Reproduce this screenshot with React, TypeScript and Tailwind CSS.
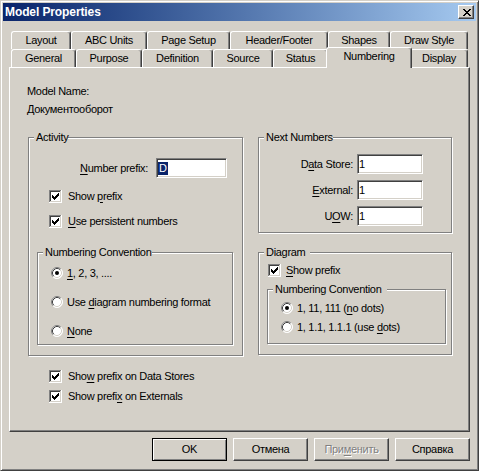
import type { ReactNode } from 'react';

const rowOne = [
  { label: 'Layout', w: 'w-[60px]' },
  { label: 'ABC Units', w: 'w-[76px]' },
  { label: 'Page Setup', w: 'w-[83px]' },
  { label: 'Header/Footer', w: 'w-[98px]' },
  { label: 'Shapes', w: 'w-[62px]' },
  { label: 'Draw Style', w: 'w-[78px]' },
];

const rowTwo = [
  { label: 'General', w: 'w-[65px]' },
  { label: 'Purpose', w: 'w-[66px]' },
  { label: 'Definition', w: 'w-[71px]' },
  { label: 'Source', w: 'w-[60px]' },
  { label: 'Status', w: 'w-[55px]' },
  { label: 'Numbering', w: 'w-[86px]', active: true },
  { label: 'Display', w: 'w-[58px]' },
];

// pixel check mark, [x, y, width]
const checkPixels = [
  [9, 3, 1],
  [8, 4, 2],
  [3, 5, 1],
  [7, 5, 3],
  [3, 6, 2],
  [6, 6, 3],
  [3, 7, 5],
  [4, 8, 3],
  [5, 9, 1],
];

function U({ children }: { children: ReactNode }) {
  return <span className="underline underline-offset-[2px] decoration-1">{children}</span>;
}

function CheckBox({ checked = true }: { checked?: boolean }) {
  return (
    <svg width="13" height="13" viewBox="0 0 13 13" shapeRendering="crispEdges" className="shrink-0">
      <rect x="0" y="0" width="13" height="13" fill="#fff" />
      <rect x="0" y="0" width="12" height="1" fill="#808080" />
      <rect x="0" y="0" width="1" height="12" fill="#808080" />
      <rect x="1" y="1" width="10" height="1" fill="#404040" />
      <rect x="1" y="1" width="1" height="10" fill="#404040" />
      <rect x="1" y="11" width="11" height="1" fill="#d4d0c8" />
      <rect x="11" y="1" width="1" height="11" fill="#d4d0c8" />
      {checked &&
        checkPixels.map(([x, y, w]) => (
          <rect key={`${x}-${y}`} x={x} y={y} width={w} height="1" fill="#000" />
        ))}
    </svg>
  );
}

function Radio({ checked = false }: { checked?: boolean }) {
  return (
    <svg width="12" height="12" viewBox="0 0 12 12" className="shrink-0">
      <circle cx="6" cy="6" r="5.5" fill="#fff" />
      <path d="M2.11 9.89 A5.5 5.5 0 0 1 9.89 2.11" fill="none" stroke="#808080" />
      <path d="M9.89 2.11 A5.5 5.5 0 0 1 2.11 9.89" fill="none" stroke="#fff" />
      <path d="M2.82 9.18 A4.5 4.5 0 0 1 9.18 2.82" fill="none" stroke="#404040" />
      <path d="M9.18 2.82 A4.5 4.5 0 0 1 2.82 9.18" fill="none" stroke="#d4d0c8" />
      {checked && <circle cx="6" cy="6" r="2" fill="#000" />}
    </svg>
  );
}

function Group({
  label,
  className,
  labelClass = '',
  children,
}: {
  label: string;
  className: string;
  labelClass?: string;
  children: ReactNode;
}) {
  return (
    <div className={`relative border border-[#808080] shadow-[inset_1px_1px_0_#fff,1px_1px_0_#fff] ${className}`}>
      <span className={`absolute -top-[7px] left-[5px] pl-[2px] bg-[#d4d0c8] leading-[13px] ${labelClass}`}>
        {label}
      </span>
      {children}
    </div>
  );
}

function Field({ w, children }: { w: string; children: ReactNode }) {
  return (
    <div
      className={`h-[20px] ${w} bg-white border border-t-[#808080] border-l-[#808080] border-r-white border-b-white shadow-[inset_1px_1px_0_#404040,inset_-1px_-1px_0_#d4d0c8] flex items-center pl-[1px]`}
    >
      {children}
    </div>
  );
}

function Button({ children, main, disabled }: { children: ReactNode; main?: boolean; disabled?: boolean }) {
  return (
    <button
      type="button"
      className={`w-[75px] h-[23px] flex items-center justify-center ${
        main
          ? 'border border-black shadow-[inset_1px_1px_0_#fff,inset_-1px_-1px_0_#808080]'
          : 'border border-t-white border-l-white border-r-[#404040] border-b-[#404040] shadow-[inset_-1px_-1px_0_#808080]'
      } ${disabled ? 'text-[#808080] [text-shadow:1px_1px_0_#fff]' : ''}`}
    >
      {children}
    </button>
  );
}

function Tab({ label, w, active }: { label: string; w: string; active?: boolean }) {
  return (
    <div
      className={`${w} border-t border-l border-r border-t-white border-l-white border-r-[#404040] rounded-t-[3px] shadow-[inset_-1px_0_0_#808080] flex justify-center leading-[17px] shrink-0 ${
        active ? 'h-[21px] -mt-[2px] -mx-[2px] relative z-10 bg-[#d4d0c8]' : 'h-[18px]'
      }`}
    >
      {label}
    </div>
  );
}

function CloseGlyph() {
  const rows = [
    [0, 1, 6, 7],
    [1, 2, 5, 6],
    [2, 3, 4, 5],
    [3, 4],
    [2, 3, 4, 5],
    [1, 2, 5, 6],
    [0, 1, 6, 7],
  ];
  return (
    <svg width="8" height="7" viewBox="0 0 8 7" shapeRendering="crispEdges">
      {rows.map((xs, y) => xs.map((x) => <rect key={`${x}-${y}`} x={x} y={y} width="1" height="1" fill="#000" />))}
    </svg>
  );
}

export default function App() {
  return (
    <div className="w-[479px] h-[471px] bg-[#d4d0c8] border border-t-[#d4d0c8] border-l-[#d4d0c8] border-r-[#404040] border-b-[#404040] shadow-[inset_1px_1px_0_#fff,inset_-1px_-1px_0_#808080] p-[2px] font-['Liberation_Sans',Arial,sans-serif] text-[11px] leading-[13px] tracking-[-0.3px] text-black select-none">
      {/* Title bar */}
      <div className="h-[18px] bg-linear-to-r from-[#0a246a] to-[#a6caf0] flex items-center justify-between pl-[2px] pr-[2px]">
        <span className="text-white font-bold text-[12px] tracking-[-0.1px]">Model Properties</span>
        <div className="w-[16px] h-[14px] bg-[#d4d0c8] border border-t-white border-l-white border-r-[#404040] border-b-[#404040] shadow-[inset_-1px_-1px_0_#808080] flex items-center justify-center pl-px">
          <CloseGlyph />
        </div>
      </div>

      {/* Tabs */}
      <div className="mt-[10px] pl-[8px]">
        <div className="flex h-[18px]">
          {rowOne.map((t) => (
            <Tab key={t.label} label={t.label} w={t.w} />
          ))}
        </div>
        <div className="flex items-start h-[18px]">
          {rowTwo.map((t) => (
            <Tab key={t.label} label={t.label} w={t.w} active={t.active} />
          ))}
        </div>
      </div>

      {/* Page */}
      <div className="ml-[6px] w-[461px] h-[365px] border border-t-white border-l-white border-r-[#404040] border-b-[#404040] shadow-[inset_-1px_-1px_0_#808080] pt-[14px] pl-[18px]">
        <div className="-ml-px leading-[18px]">Model Name:</div>
        <div className="-ml-px leading-[18px]">Документооборот</div>

        <div className="mt-[19px] flex gap-[15px]">
          {/* Left column */}
          <div className="w-[215px]">
            <Group label="Activity" className="w-[215px] h-[219px] pt-[20px]">
              <div className="h-[20px] flex items-center justify-end gap-[8px] pr-[15px]">
                <span>
                  <U>N</U>umber prefix:
                </span>
                <Field w="w-[71px]">
                  <span className="bg-[#0a246a] text-white px-[1px] leading-[13px]">D</span>
                </Field>
              </div>
              <div className="mt-[10px] h-[16px] flex items-center gap-[6px] pl-[20px]">
                <CheckBox />
                <span>
                  Show <U>p</U>refix
                </span>
              </div>
              <div className="mt-[9px] h-[16px] flex items-center gap-[6px] pl-[20px]">
                <CheckBox />
                <span>
                  <U>U</U>se persistent numbers
                </span>
              </div>
              <Group label="Numbering Convention" className="mt-[23px] ml-[8px] w-[196px] h-[93px] pt-[12px]">
                <div className="flex flex-col gap-[13px]">
                  <div className="h-[16px] flex items-center gap-[4px] pl-[13px]">
                    <Radio checked />
                    <span>
                      <U>1</U>, 2, 3, ....
                    </span>
                  </div>
                  <div className="h-[16px] flex items-center gap-[4px] pl-[13px]">
                    <Radio />
                    <span>
                      Use <U>d</U>iagram numbering format
                    </span>
                  </div>
                  <div className="h-[16px] flex items-center gap-[4px] pl-[13px]">
                    <Radio />
                    <span>
                      <U>N</U>one
                    </span>
                  </div>
                </div>
              </Group>
            </Group>

            <div className="mt-[12px] flex flex-col gap-[4px] pl-[21px]">
              <div className="h-[16px] flex items-center gap-[6px]">
                <CheckBox />
                <span>
                  Sho<U>w</U> prefix on Data Stores
                </span>
              </div>
              <div className="h-[16px] flex items-center gap-[6px]">
                <CheckBox />
                <span>
                  Show prefi<U>x</U> on Externals
                </span>
              </div>
            </div>
          </div>

          {/* Right column */}
          <div className="w-[194px]">
            <Group label="Next Numbers" className="w-[194px] h-[96px] pt-[16px]">
              <div className="flex flex-col gap-[6px]">
                <div className="h-[20px] flex items-center justify-end gap-[4px] pr-[28px]">
                  <span>
                    D<U>a</U>ta Store:
                  </span>
                  <Field w="w-[66px]">1</Field>
                </div>
                <div className="h-[20px] flex items-center justify-end gap-[4px] pr-[28px]">
                  <span>
                    <U>E</U>xternal:
                  </span>
                  <Field w="w-[66px]">1</Field>
                </div>
                <div className="h-[20px] flex items-center justify-end gap-[4px] pr-[28px]">
                  <span>
                    U<U>O</U>W:
                  </span>
                  <Field w="w-[66px]">1</Field>
                </div>
              </div>
            </Group>

            <Group label="Diagram" labelClass="pr-[5px]" className="mt-[19px] w-[194px] h-[103px] pt-[9px]">
              <div className="h-[16px] flex items-center gap-[5px] pl-[9px]">
                <CheckBox />
                <span>
                  <U>S</U>how prefix
                </span>
              </div>
              <Group
                label="Numbering Convention"
                labelClass="pr-[5px]"
                className="mt-[11px] ml-[8px] w-[179px] h-[55px] pt-[10px]"
              >
                <div className="flex flex-col gap-[3px]">
                  <div className="h-[16px] flex items-center gap-[4px] pl-[13px]">
                    <Radio checked />
                    <span>
                      1, 11, 111 (<U>n</U>o dots)
                    </span>
                  </div>
                  <div className="h-[16px] flex items-center gap-[4px] pl-[13px]">
                    <Radio />
                    <span>
                      1, 1.1, 1.1.1 (use <U>d</U>ots)
                    </span>
                  </div>
                </div>
              </Group>
            </Group>
          </div>
        </div>
      </div>

      {/* Buttons */}
      <div className="mt-[6px] ml-[6px] w-[461px] flex justify-end gap-[6px]">
        <Button main>OK</Button>
        <Button>Отмена</Button>
        <Button disabled>
          <span>
            При<U>м</U>енить
          </span>
        </Button>
        <Button>Справка</Button>
      </div>
    </div>
  );
}
